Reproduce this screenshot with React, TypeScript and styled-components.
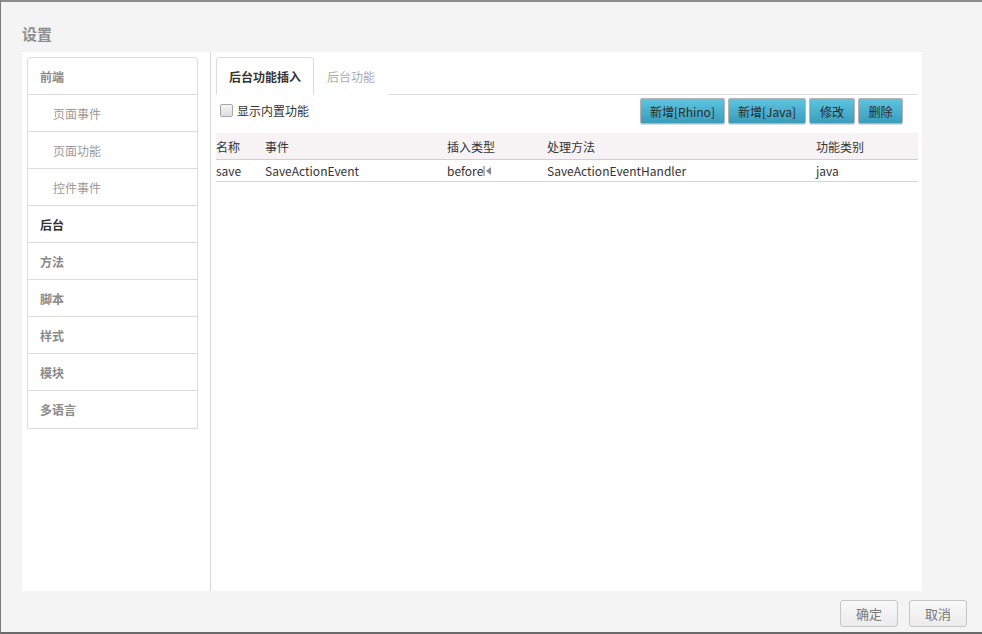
import React from "react";
import styled, { createGlobalStyle } from "styled-components";

const Global = createGlobalStyle`
  html, body { margin: 0; padding: 0; background: #f3f3f3; }
  body { font-family: "Noto Sans CJK SC", "Noto Sans", sans-serif; font-size: 12px; color: #333; }
  * { box-sizing: border-box; }
`;

const Frame = styled.div`
  width: 982px;
  height: 634px;
  background: #f4f4f4;
  border-top: 2px solid #8c8c8c;
  border-left: 1px solid #7a7a7a;
  border-bottom: 2px solid #6a6a6a;
  display: flex;
  flex-direction: column;
`;

const Title = styled.div`
  height: 50px;
  padding: 12px 0 0 21px;
  display: flex;
  align-items: center;
  font-size: 15px;
  font-weight: bold;
  color: #8f8f8f;
`;

const Panel = styled.div`
  margin-left: 21px;
  width: 900px;
  height: 539px;
  background: #fff;
  display: flex;
`;

const LeftCol = styled.div`
  width: 189px;
  padding: 5px 12px 0 5px;
  border-right: 1px solid #d8d8d8;
`;

const Menu = styled.div`
  width: 171px;
  border: 1px solid #dcdcdc;
  border-radius: 4px 4px 0 0;
`;

const MenuItem = styled.div<{ $sub?: boolean; $active?: boolean; $last?: boolean }>`
  height: 37px;
  display: flex;
  align-items: center;
  padding-left: ${(p) => (p.$sub ? 25 : 12)}px;
  border-bottom: ${(p) => (p.$last ? "none" : "1px solid #dcdcdc")};
  font-size: 12px;
  font-weight: ${(p) => (p.$sub ? "normal" : "bold")};
  color: ${(p) => (p.$active ? "#333" : p.$sub ? "#9a9a9a" : "#8a8a8a")};
`;

const RightCol = styled.div`
  flex: 1;
  padding: 5px 4px 0 5px;
  display: flex;
  flex-direction: column;
`;

const Tabs = styled.div`
  display: flex;
  height: 38px;
  border-bottom: 1px solid #dcdcdc;
`;

const Tab = styled.div<{ $active?: boolean }>`
  height: 38px;
  padding: 0 12px;
  display: flex;
  align-items: center;
  border: 1px solid ${(p) => (p.$active ? "#dcdcdc" : "transparent")};
  border-bottom: ${(p) => (p.$active ? "1px solid #fff" : "none")};
  border-radius: 4px 4px 0 0;
  background: #fff;
  font-weight: ${(p) => (p.$active ? "bold" : "normal")};
  color: ${(p) => (p.$active ? "#333" : "#aaa")};
  margin-bottom: -1px;
`;

const Toolbar = styled.div`
  height: 38px;
  display: flex;
  align-items: flex-start;
  justify-content: space-between;
  padding: 3px 15px 0 4px;
`;

const CheckLabel = styled.label`
  display: flex;
  align-items: center;
  gap: 4px;
  margin-top: 4px;
  color: #333;
`;

const Check = styled.span`
  width: 13px;
  height: 13px;
  border: 1px solid #a8a8a8;
  border-radius: 2px;
  background: linear-gradient(#f4f4f4, #dedede);
`;

const Buttons = styled.div`
  display: flex;
  gap: 3px;
`;

const ActionButton = styled.button<{ $w: number }>`
  width: ${(p) => p.$w}px;
  height: 26px;
  padding: 0;
  border: 1px solid #b4b4b4;
  border-radius: 2px;
  background: linear-gradient(#5ec4e0, #3a9dbb);
  color: #2a2a2a;
  font-family: "Noto Sans CJK SC", "Noto Sans", sans-serif;
  font-size: 12px;
  box-shadow: 0 1px 1px rgba(0, 0, 0, 0.15);
`;

const Table = styled.div`
  width: 702px;
`;

const Row = styled.div<{ $head?: boolean }>`
  display: grid;
  grid-template-columns: 49px 182px 100px 269px 102px;
  height: ${(p) => (p.$head ? 27 : 22)}px;
  align-items: center;
  background: ${(p) => (p.$head ? "#f7f3f5" : "#fff")};
  border-bottom: 1px solid ${(p) => (p.$head ? "#cfcfcf" : "#d4d4d4")};
  color: #333;
`;

const Cell = styled.div`
  display: flex;
  align-items: center;
  white-space: nowrap;
`;

const Footer = styled.div`
  flex: 1;
  display: flex;
  justify-content: flex-end;
  align-items: flex-start;
  gap: 11px;
  padding: 9px 15px 0 0;
`;

const FooterButton = styled.button`
  width: 58px;
  height: 27px;
  border: 1px solid #c6c6c6;
  border-radius: 3px;
  background: linear-gradient(#f8f8f8, #ececec);
  color: #777;
  font-family: "Noto Sans CJK SC", "Noto Sans", sans-serif;
  font-size: 13px;
  padding: 0;
`;

const Resizer = () => (
  <svg width="9" height="10" viewBox="0 0 9 10">
    <rect x="0" y="0" width="2" height="10" fill="#b5b5b5" />
    <path d="M8 1 L3 5 L8 9 Z" fill="#8a8a8a" />
  </svg>
);

const menu = [
  { label: "前端" },
  { label: "页面事件", sub: true },
  { label: "页面功能", sub: true },
  { label: "控件事件", sub: true },
  { label: "后台", active: true },
  { label: "方法" },
  { label: "脚本" },
  { label: "样式" },
  { label: "模块" },
  { label: "多语言" },
];

export default function App() {
  return (
    <>
      <Global />
      <Frame>
        <Title>设置</Title>
        <Panel>
          <LeftCol>
            <Menu>
              {menu.map((m, i) => (
                <MenuItem key={m.label} $sub={m.sub} $active={m.active} $last={i === menu.length - 1}>
                  {m.label}
                </MenuItem>
              ))}
            </Menu>
          </LeftCol>
          <RightCol>
            <Tabs>
              <Tab $active>后台功能插入</Tab>
              <Tab>后台功能</Tab>
            </Tabs>
            <Toolbar>
              <CheckLabel>
                <Check />
                显示内置功能
              </CheckLabel>
              <Buttons>
                <ActionButton $w={85}>新增[Rhino]</ActionButton>
                <ActionButton $w={78}>新增[Java]</ActionButton>
                <ActionButton $w={46}>修改</ActionButton>
                <ActionButton $w={45}>删除</ActionButton>
              </Buttons>
            </Toolbar>
            <Table>
              <Row $head>
                <Cell>名称</Cell>
                <Cell>事件</Cell>
                <Cell>插入类型</Cell>
                <Cell>处理方法</Cell>
                <Cell>功能类别</Cell>
              </Row>
              <Row>
                <Cell>save</Cell>
                <Cell>SaveActionEvent</Cell>
                <Cell>
                  before
                  <Resizer />
                </Cell>
                <Cell>SaveActionEventHandler</Cell>
                <Cell>java</Cell>
              </Row>
            </Table>
          </RightCol>
        </Panel>
        <Footer>
          <FooterButton>确定</FooterButton>
          <FooterButton>取消</FooterButton>
        </Footer>
      </Frame>
    </>
  );
}
